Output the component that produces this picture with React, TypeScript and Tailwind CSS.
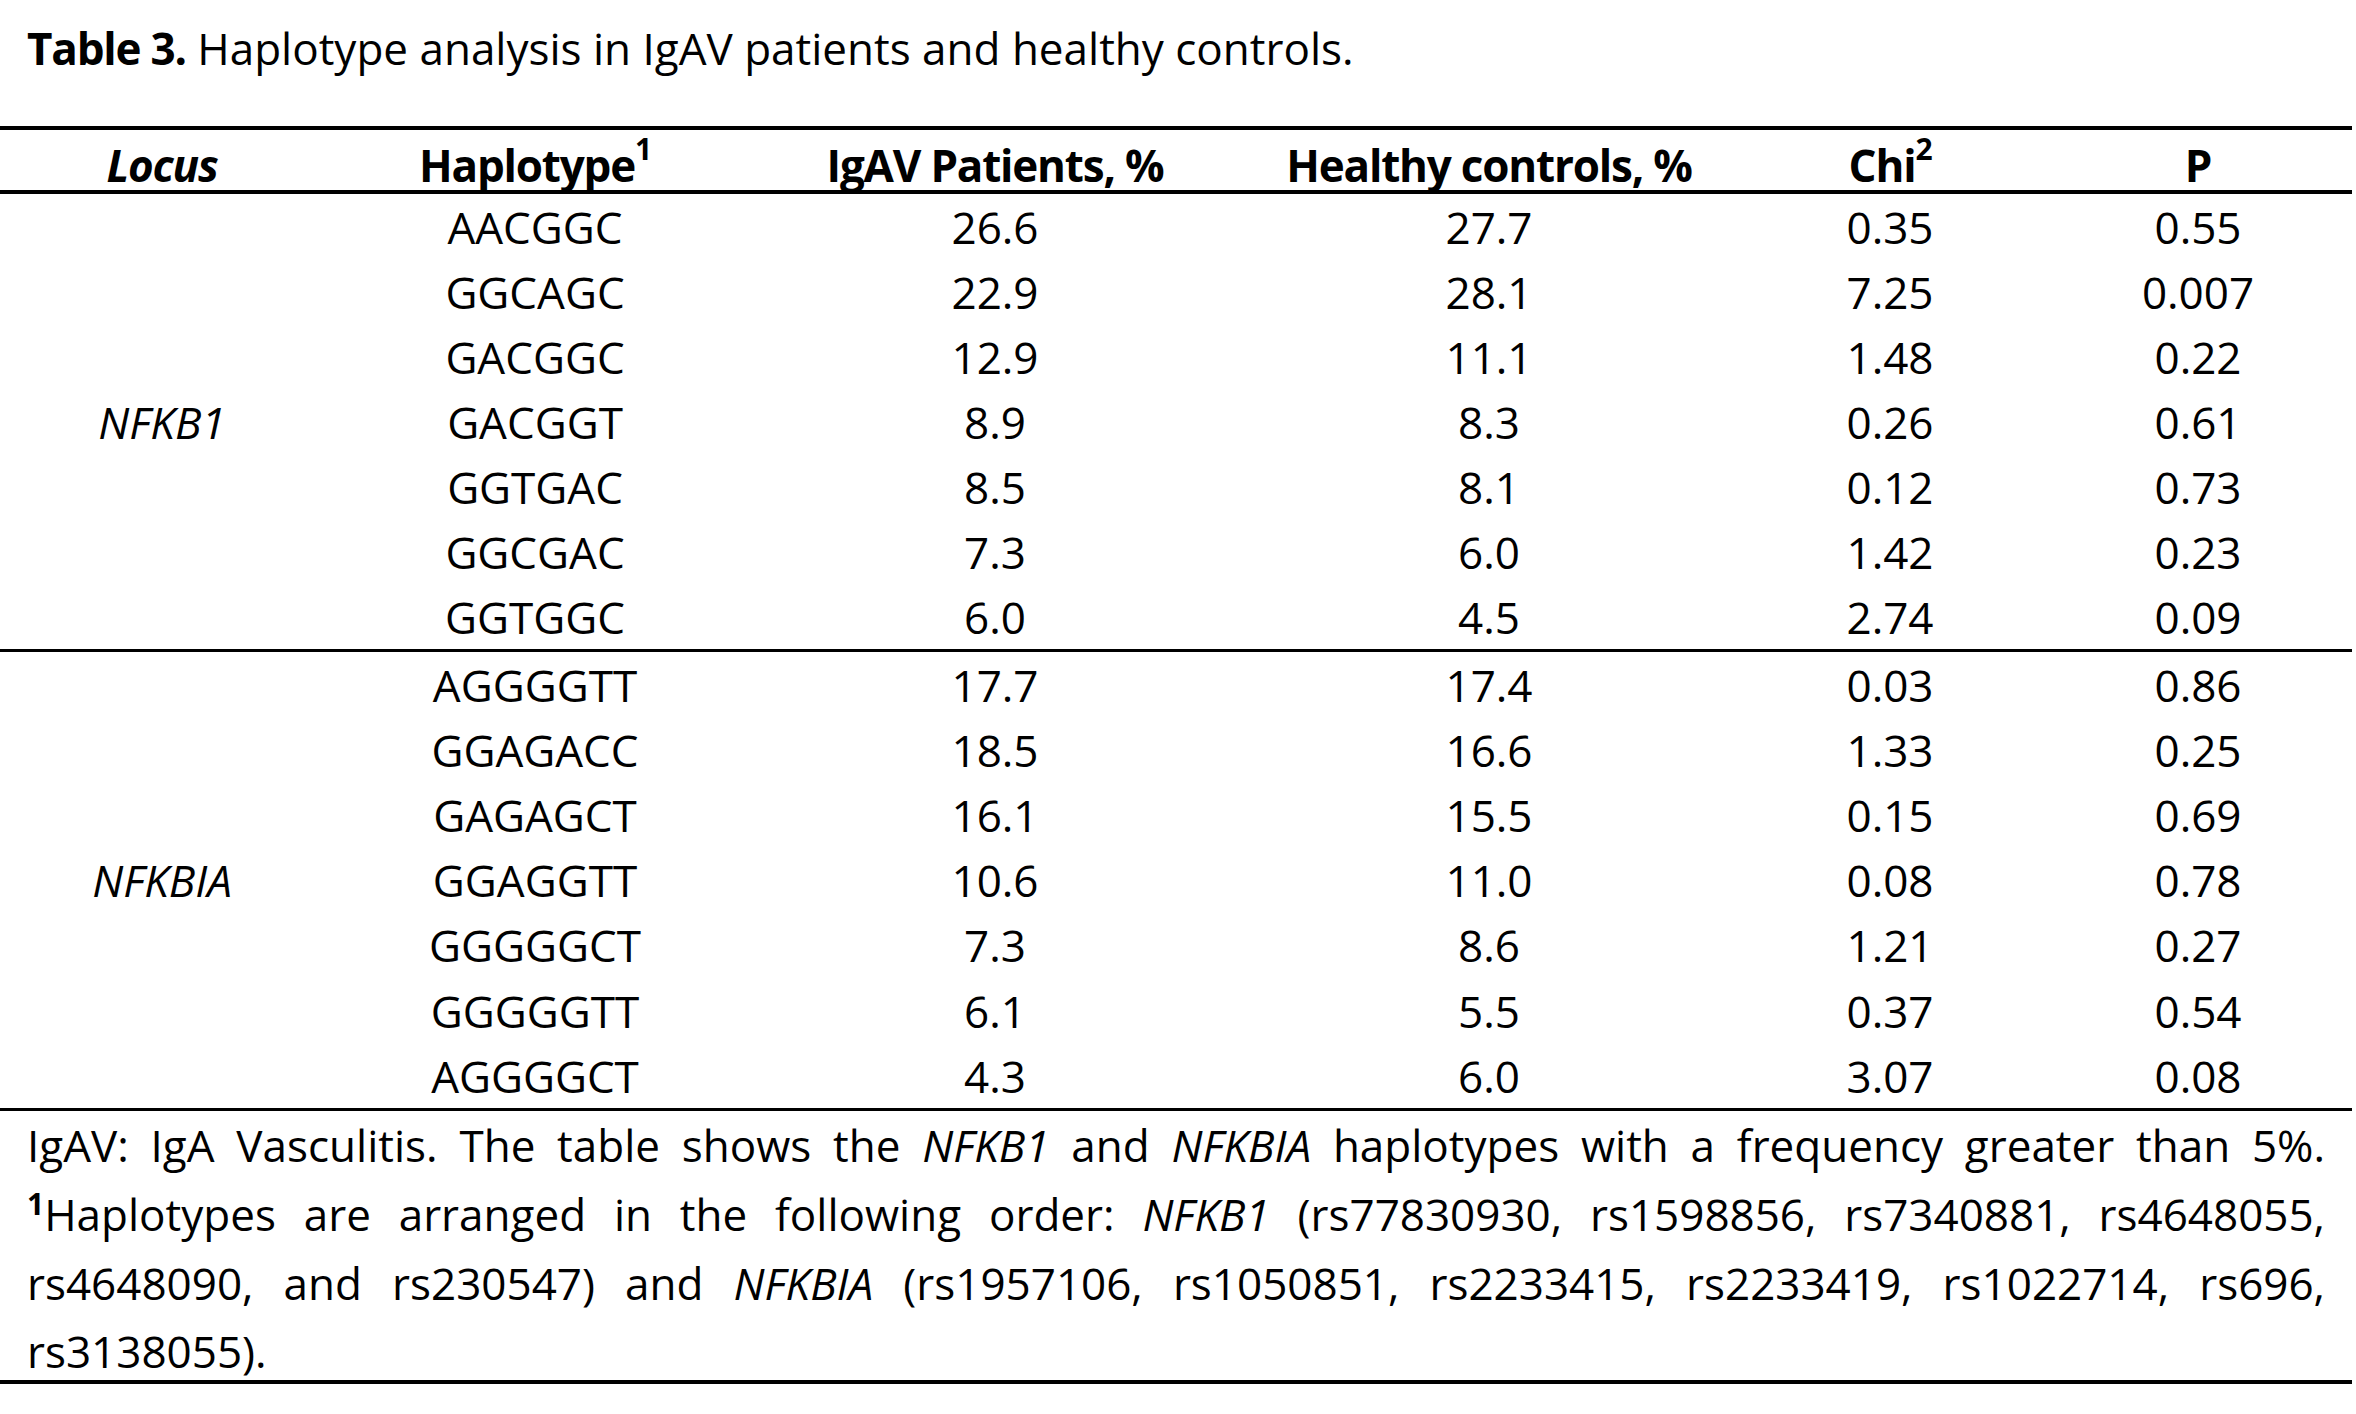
const nfkb1 = [
  ["AACGGC", "26.6", "27.7", "0.35", "0.55"],
  ["GGCAGC", "22.9", "28.1", "7.25", "0.007"],
  ["GACGGC", "12.9", "11.1", "1.48", "0.22"],
  ["GACGGT", "8.9", "8.3", "0.26", "0.61"],
  ["GGTGAC", "8.5", "8.1", "0.12", "0.73"],
  ["GGCGAC", "7.3", "6.0", "1.42", "0.23"],
  ["GGTGGC", "6.0", "4.5", "2.74", "0.09"],
];

const nfkbia = [
  ["AGGGGTT", "17.7", "17.4", "0.03", "0.86"],
  ["GGAGACC", "18.5", "16.6", "1.33", "0.25"],
  ["GAGAGCT", "16.1", "15.5", "0.15", "0.69"],
  ["GGAGGTT", "10.6", "11.0", "0.08", "0.78"],
  ["GGGGGCT", "7.3", "8.6", "1.21", "0.27"],
  ["GGGGGTT", "6.1", "5.5", "0.37", "0.54"],
  ["AGGGGCT", "4.3", "6.0", "3.07", "0.08"],
];

const cols = "grid grid-cols-[324px_422px_498px_490px_312px_304px]";

const LocusBlock = ({
  name,
  rows,
  rowH,
}: {
  name: string;
  rows: string[][];
  rowH: string;
}) => (
  <div className={cols}>
    <div className="row-span-7 flex items-center justify-center italic">
      {name}
    </div>
    {rows.map((r, i) =>
      r.map((cell, j) => (
        <div
          key={`${i}-${j}`}
          className={`${rowH} flex items-center justify-center`}
        >
          {cell}
        </div>
      ))
    )}
  </div>
);

export default function App() {
  return (
    <div className="w-[2356px] h-[1414px] bg-white text-black font-['Open_Sans',sans-serif] text-[44px]">
      <div className="w-[2352px]">
        {/* Caption */}
        <div className="pl-[27px] pt-[16px] leading-[64px] mb-[46px]">
          <span className="font-bold tracking-[-1.2px]">Table 3.</span>{" "}
          Haplotype analysis in IgAV patients and healthy controls.
        </div>

        {/* Header */}
        <div
          className={`${cols} border-t-[4px] border-b-[4px] border-black h-[68px] pt-[2px] font-bold tracking-[-1.2px]`}
        >
          <div className="flex items-center justify-center italic">Locus</div>
          <div className="flex items-center justify-center">
            Haplotype<sup className="text-[30px] top-[-0.55em]">1</sup>
          </div>
          <div className="flex items-center justify-center">
            IgAV Patients, %
          </div>
          <div className="flex items-center justify-center">
            Healthy controls, %
          </div>
          <div className="flex items-center justify-center">
            Chi<sup className="text-[30px] top-[-0.55em]">2</sup>
          </div>
          <div className="flex items-center justify-center">P</div>
        </div>

        <LocusBlock name="NFKB1" rows={nfkb1} rowH="h-[65px]" />
        <div className="border-t-[3px] border-black" />
        <LocusBlock name="NFKBIA" rows={nfkbia} rowH="h-[65.2px]" />

        {/* Footnote */}
        <div className="border-t-[3px] border-b-[4px] border-black px-[27px] leading-[69px]">
          <div className="text-justify [text-align-last:justify] whitespace-nowrap">
            IgAV: IgA Vasculitis. The table shows the <i>NFKB1</i> and{" "}
            <i>NFKBIA</i> haplotypes with a frequency greater than 5%.
          </div>
          <div className="text-justify [text-align-last:justify] whitespace-nowrap">
            <sup className="font-bold text-[30px] top-[-0.55em]">1</sup>
            Haplotypes are arranged in the following order: <i>NFKB1</i>{" "}
            (rs77830930, rs1598856, rs7340881, rs4648055,
          </div>
          <div className="text-justify [text-align-last:justify] whitespace-nowrap">
            rs4648090, and rs230547) and <i>NFKBIA</i> (rs1957106, rs1050851,
            rs2233415, rs2233419, rs1022714, rs696,
          </div>
          <div className="h-[62px] leading-[66px] overflow-visible">
            rs3138055).
          </div>
        </div>
      </div>
    </div>
  );
}
